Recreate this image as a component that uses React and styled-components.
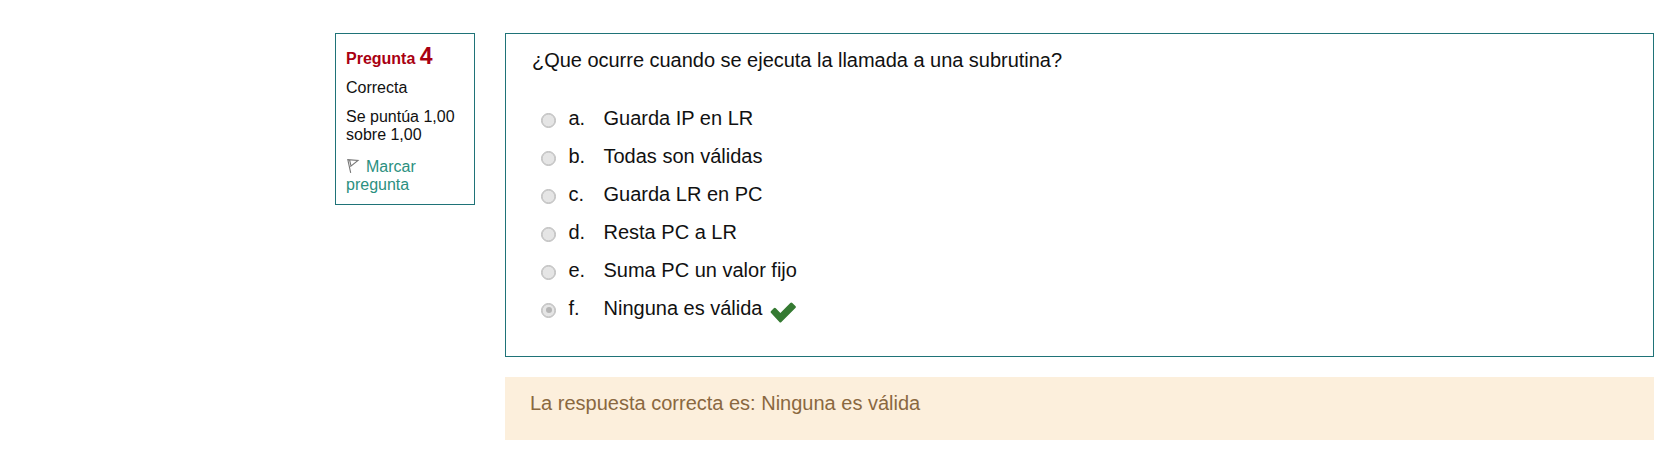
import React from "react";
import styled, { createGlobalStyle } from "styled-components";

const GlobalStyle = createGlobalStyle`
  body {
    margin: 0;
    background: #fff;
    color: #111;
    font-family: "Liberation Sans", Arial, sans-serif;
  }
`;

const Question = styled.main`
  display: flex;
  align-items: flex-start;
  gap: 30px;
  padding: 33px 24px 30px 335px;
`;

const Info = styled.aside`
  box-sizing: border-box;
  flex: none;
  width: 140px;
  height: 172px;
  padding: 9px 0 0 10px;
  border: 1px solid #1f7378;
  font-size: 16px;
  line-height: 18px;
`;

const Heading = styled.h3`
  margin: 0;
  color: #a90011;
  font-size: 16px;
  line-height: 27px;
  font-weight: 700;
`;

const Number = styled.span`
  font-size: 23px;
`;

const InfoLine = styled.div`
  margin-top: ${(p) => p.$gap}px;
  white-space: pre-line;
`;

const FlagLink = styled.a`
  display: block;
  margin-top: 14px;
  color: #2b9080;
`;

const FlagIcon = styled.svg`
  width: 14px;
  height: 14px;
  margin-right: 6px;
  vertical-align: -1px;
`;

const Content = styled.div`
  flex: 1;
  font-size: 20px;
  line-height: 28px;
`;

const Formulation = styled.section`
  box-sizing: border-box;
  height: 324px;
  padding: 12px 26px;
  border: 1px solid #1f7378;
`;

const Prompt = styled.p`
  margin: 0 0 25px;
  letter-spacing: -0.025px;
`;

const Answer = styled.label`
  display: flex;
  align-items: center;
  height: 38px;
  padding-left: 9px;
`;

const Radio = styled.span`
  box-sizing: border-box;
  display: grid;
  place-items: center;
  width: 15px;
  height: 15px;
  margin: 4px 12.5px 0 0;
  border: 1.5px solid #bdbdbd;
  box-shadow: inset 0 0 0 0.6px #bdbdbd;
  border-radius: 50%;
  background: #e5e5e5;

  &::after {
    content: "";
    width: 6px;
    height: 6px;
    border-radius: 50%;
    background: ${(p) => (p.$checked ? "#b5b5b5" : "transparent")};
  }
`;

const Letter = styled.span`
  width: 35px;
`;

const CheckIcon = styled.svg`
  width: 26px;
  height: 21px;
  margin: 9px 0 0 7px;
`;

const Outcome = styled.section`
  box-sizing: border-box;
  height: 63px;
  margin-top: 20px;
  padding: 12px 25px;
  background: #fcefdc;
  color: #8a6840;
`;

const answers = [
  ["a.", "Guarda IP en LR"],
  ["b.", "Todas son válidas"],
  ["c.", "Guarda LR en PC"],
  ["d.", "Resta PC a LR"],
  ["e.", "Suma PC un valor fijo"],
  ["f.", "Ninguna es válida", true],
];

export default function App() {
  return (
    <>
      <GlobalStyle />
      <Question>
        <Info>
          <Heading>
            Pregunta <Number>4</Number>
          </Heading>
          <InfoLine $gap={7}>Correcta</InfoLine>
          <InfoLine $gap={11}>{"Se puntúa 1,00\nsobre 1,00"}</InfoLine>
          <FlagLink>
            <FlagIcon viewBox="0 0 14 14" fill="none" stroke="#777" strokeWidth="1.1">
              <path d="M4.7 13.8 1.8.6 12 1.4 4.3 7.6M3.6 1 5 6.8" />
            </FlagIcon>
            Marcar pregunta
          </FlagLink>
        </Info>
        <Content>
          <Formulation>
            <Prompt>¿Que ocurre cuando se ejecuta la llamada a una subrutina?</Prompt>
            {answers.map(([letter, text, chosen]) => (
              <Answer key={letter}>
                <Radio $checked={chosen} />
                <Letter>{letter}</Letter>
                <span>{text}</span>
                {chosen && (
                  <CheckIcon viewBox="0 0 26 21" fill="#357a32">
                    <path d="M1.1 9 3.8 6.3Q4.8 5.3 5.8 6.3L10.4 10.9 20.3 1Q21.3 0 22.3 1L25.4 4.1Q26.4 5.1 25.4 6.1L11.4 19.9Q10.4 20.9 9.4 19.9L1.1 11Q.1 10 1.1 9Z" />
                  </CheckIcon>
                )}
              </Answer>
            ))}
          </Formulation>
          <Outcome>La respuesta correcta es: Ninguna es válida</Outcome>
        </Content>
      </Question>
    </>
  );
}
